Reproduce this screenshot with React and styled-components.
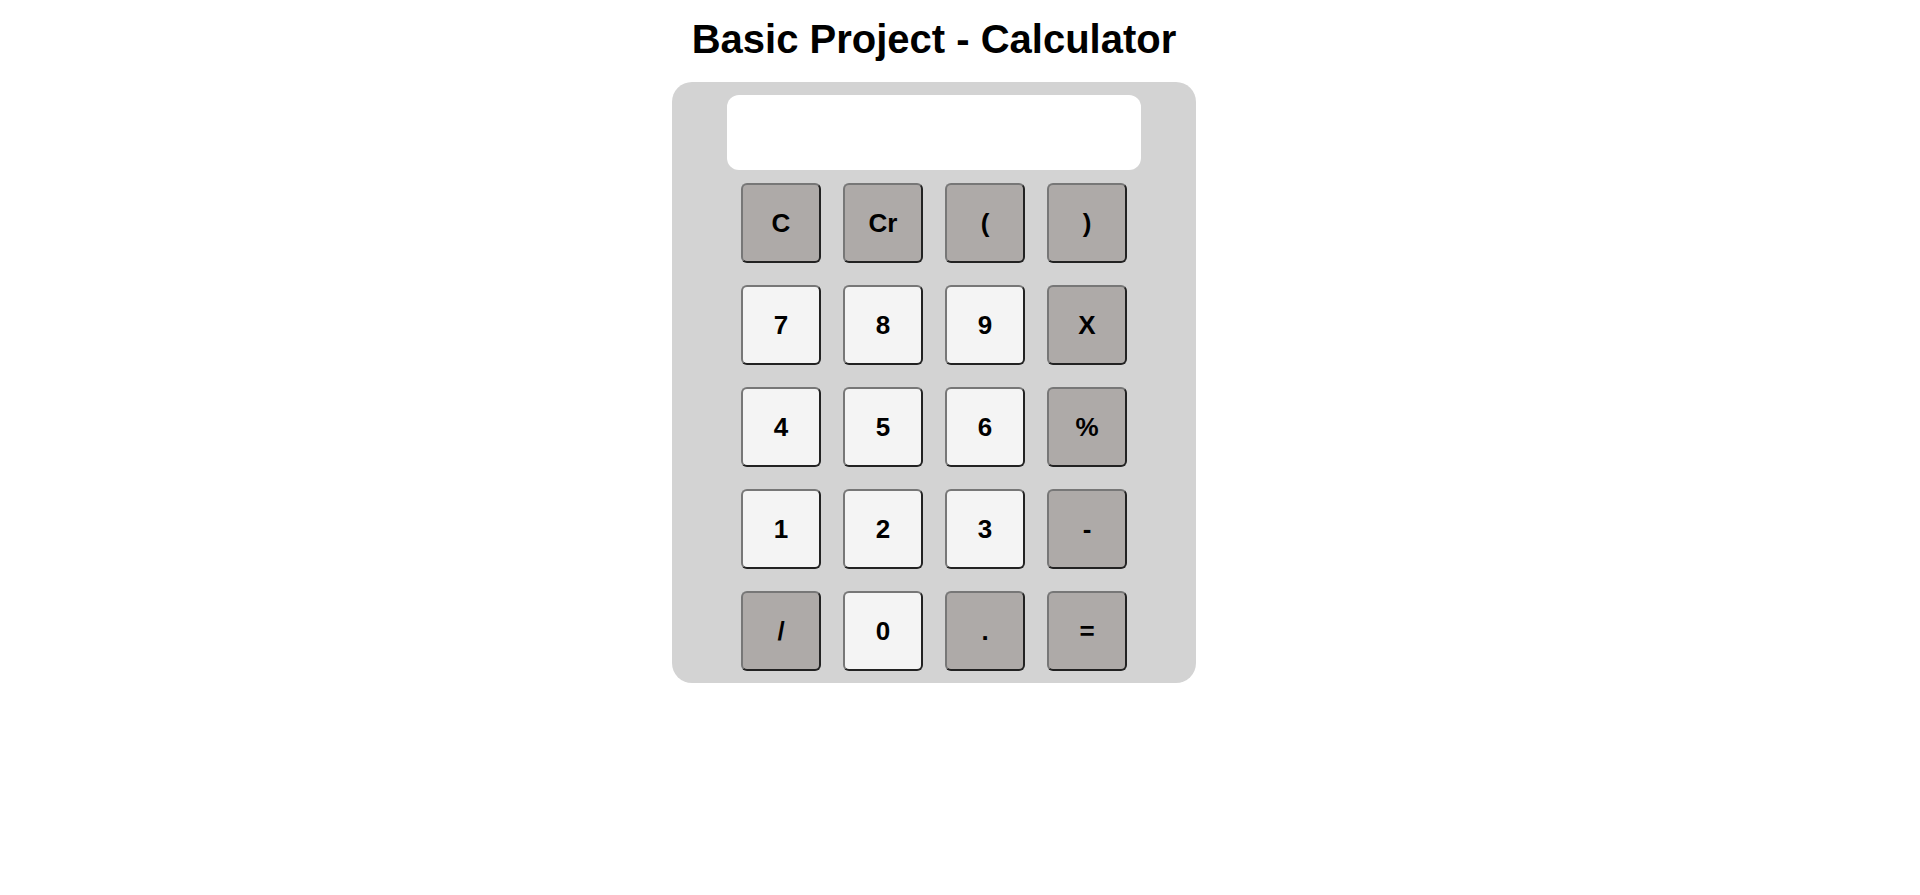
import React from 'react';
import styled, { createGlobalStyle } from 'styled-components';

const GlobalStyle = createGlobalStyle`
  body {
    margin: 0;
    background: #ffffff;
    font-family: "Liberation Sans", Arial, sans-serif;
  }
`;

const Page = styled.div`
  display: flex;
  flex-direction: column;
  align-items: center;
  padding: 16px 52px 0 0;
`;

const Title = styled.h1`
  margin: 0 0 20px;
  font-size: 40px;
  line-height: 46px;
  font-weight: bold;
  color: #000;
`;

const Calculator = styled.div`
  width: 524px;
  box-sizing: border-box;
  padding: 13px 0 12px;
  background: #d3d3d3;
  border-radius: 20px;
  display: flex;
  flex-direction: column;
  align-items: center;
  gap: 13px;
`;

const Display = styled.div`
  width: 414px;
  height: 75px;
  background: #ffffff;
  border-radius: 12px;
`;

const Keypad = styled.div`
  display: grid;
  grid-template-columns: repeat(4, 80px);
  grid-auto-rows: 80px;
  column-gap: 22px;
  row-gap: 22px;
`;

const Key = styled.button`
  box-sizing: border-box;
  width: 80px;
  height: 80px;
  margin: 0;
  padding: 0;
  border: 2px solid;
  border-color: #777 #222 #222 #777;
  border-radius: 6px;
  background: ${(props) => (props.$op ? '#aeaaa8' : '#f4f4f4')};
  color: #000;
  font-family: "Liberation Sans", Arial, sans-serif;
  font-size: 26px;
  font-weight: bold;
  cursor: pointer;
`;

const keys = [
  ['C', true], ['Cr', true], ['(', true], [')', true],
  ['7', false], ['8', false], ['9', false], ['X', true],
  ['4', false], ['5', false], ['6', false], ['%', true],
  ['1', false], ['2', false], ['3', false], ['-', true],
  ['/', true], ['0', false], ['.', true], ['=', true],
];

export default function App() {
  return (
    <>
      <GlobalStyle />
      <Page>
        <Title>Basic Project - Calculator</Title>
        <Calculator>
          <Display />
          <Keypad>
            {keys.map(([label, op]) => (
              <Key key={label} $op={op}>
                {label}
              </Key>
            ))}
          </Keypad>
        </Calculator>
      </Page>
    </>
  );
}
